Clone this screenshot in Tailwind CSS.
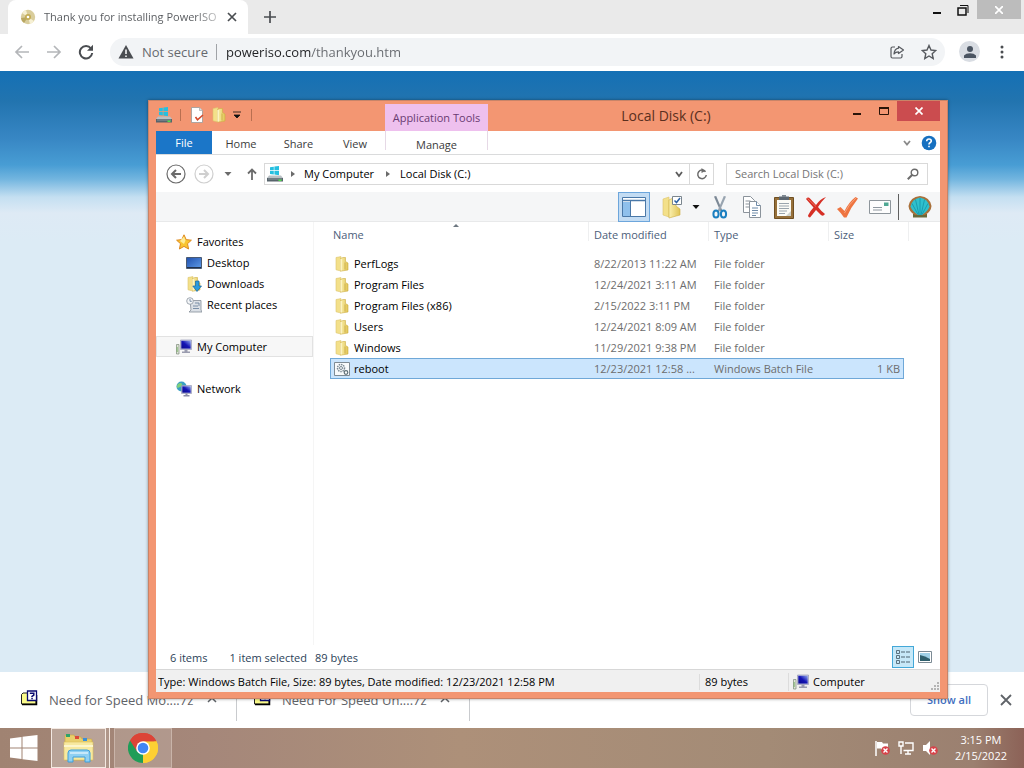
<!DOCTYPE html>
<html lang="en">
<head>
<meta charset="UTF-8">
<meta name="viewport" content="width=device-width, initial-scale=1">
<title>Local Disk (C:)</title>
<script src="https://cdn.jsdelivr.net/npm/@tailwindcss/browser@4"></script>
</head>
<body class="relative flex flex-col h-screen overflow-hidden bg-white font-['Open_Sans','Noto_Sans',sans-serif] text-[11px] leading-4 text-black">

	<!-- shared icons -->
	<svg class="absolute size-0" aria-hidden="true">
		<defs>
			<linearGradient id="g-folder" x1="0" x2="1"><stop offset="0" stop-color="#fbf0ae"/><stop offset="1" stop-color="#dfc355"/></linearGradient>
			<linearGradient id="g-screen" x1="0" y1="1" x2="1" y2="0"><stop offset="0" stop-color="#0a0a8c"/><stop offset=".5" stop-color="#1414b4"/><stop offset="1" stop-color="#8fa8f0"/></linearGradient>
			<linearGradient id="g-desk" x1="0" y1="0" x2="1" y2="1"><stop offset="0" stop-color="#1f4fae"/><stop offset="1" stop-color="#5f9ce8"/></linearGradient>
		</defs>
		<symbol id="i-folder" viewBox="0 0 16 16">
			<path d="M2 1.500 7 .6V15l-5-1.200z" fill="#f3e08a" stroke="#dcc46c" stroke-width=".6"/>
			<path d="M6.500 2.500 9 1.500h2.500v4L14 7v7L6.500 15.200z" fill="url(#g-folder)" stroke="#cfae45" stroke-width=".6"/>
			<path d="M7 3v11.500" stroke="#fffbe0" stroke-width="1"/>
			<path d="M11 6.500v7" stroke="#c9a83c" stroke-width=".8"/>
		</symbol>
		<symbol id="i-drive" viewBox="0 0 16 16">
			<path d="M3 1.200 6.800.7v3.600H3zM7.400.6 12 0v4.300H7.400zM3 5h3.800v3.500L3 8zM7.400 5H12v4.200l-4.600-.6z" fill="#25bfe0"/>
			<path d="M2 9.500h12l2 2.500H0z" fill="#b9c0c4"/>
			<path d="M0 12h16v3.500H0z" fill="#57636b"/>
			<path d="M1 12.500h14v1H1z" fill="#8b979e"/>
			<path d="M11.500 13.500h3v1.500h-3z" fill="#4fe04a"/>
		</symbol>
		<symbol id="i-computer" viewBox="0 0 16 16">
			<path d="M.5 5.500h2.500V15H.5z" fill="#dfe5d8" stroke="#7d8a78" stroke-width=".7"/>
			<path d="M1.200 8v5" stroke="#6fae5e" stroke-width=".8"/>
			<path d="M4.500 1h11v9.500h-11z" fill="#c9cbe0" stroke="#8c8fae" stroke-width=".6"/>
			<path d="M5.300 1.800h9.400v7.800H5.300z" fill="url(#g-screen)"/>
			<path d="M8.500 10.500h3v2h2.500V14H6v-1.500h2.500z" fill="#9a9caf"/>
		</symbol>
		<symbol id="i-badfile" viewBox="0 0 18 16">
			<path d="M1.500 4.500 3 3h13v11H1.500z" fill="#fbfb8a" stroke="#222" stroke-width="1"/>
			<path d="M2 14.500h14.500V5" fill="none" stroke="#000" stroke-width="1.500"/>
			<path d="M7.500 1h9v9.500h-9z" fill="#fff" stroke="#0a0a70" stroke-width="1.300"/>
			<path d="M9.800 3.200h4v1.800l-1.800 1.300v1" fill="none" stroke="#0a0a70" stroke-width="1.500"/>
			<path d="M11.300 8h1.500v1.300h-1.500z" fill="#0a0a70"/>
		</symbol>
		<symbol id="i-redx" viewBox="0 0 10 10">
			<circle cx="5" cy="5" r="4.800" fill="#d8434a"/>
			<path d="m2.800 2.800 4.400 4.400m0-4.400L2.800 7.200" stroke="#fff" stroke-width="1.500"/>
		</symbol>
	</svg>

	<!-- browser tab strip -->
	<header class="flex h-[34px] shrink-0 items-start bg-[#eaeaea]">
		<div class="ml-2 flex h-full w-60 items-center rounded-t-lg bg-white pl-3 pr-2.5">
			<svg class="size-4 shrink-0" viewBox="0 0 16 16"><circle cx="8" cy="8" r="7.200" fill="#d9cd9c"/><path d="M8 8 2 4a7 7 0 0 1 4-3zM8 8l6 4a7 7 0 0 1-4 3z" fill="#f6f0d4"/><path d="M8 8 1 9a7 7 0 0 0 3 5z" fill="#b9a762"/><circle cx="8" cy="8" r="3" fill="#c3ac55"/><circle cx="8" cy="8" r="1.300" fill="#fff"/></svg>
			<p class="ml-2 flex-1 whitespace-nowrap bg-[linear-gradient(90deg,#55585c_85%,#dcdcdc)] bg-clip-text text-transparent">Thank you for installing PowerISO</p>
			<button class="ml-1" aria-label="Close tab"><svg class="size-3" viewBox="0 0 12 12"><path d="m2 2 8 8m0-8-8 8" stroke="#4a4d51" stroke-width="1.700"/></svg></button>
		</div>
		<button class="ml-4 mt-[11px]" aria-label="New tab"><svg class="size-3" viewBox="0 0 12 12"><path d="M6 0v12M0 6h12" stroke="#4a4d51" stroke-width="1.700"/></svg></button>
		<div class="ml-auto flex h-[19px] items-center">
			<button class="w-6" aria-label="Minimize"><svg class="mx-auto h-3 w-2" viewBox="0 0 8 12"><path d="M0 9h8" stroke="#111" stroke-width="2"/></svg></button>
			<button class="w-7" aria-label="Restore"><svg class="mx-auto size-3" viewBox="0 0 12 12" fill="none" stroke="#111"><path d="M1 4h8v7H1z" stroke-width="1.500"/><path d="M3 1.500h8V9"/></svg></button>
			<button class="mr-[3px] h-full w-11 bg-[#bcbcbc]" aria-label="Close"><svg class="mx-auto size-2" viewBox="0 0 8 8"><path d="m0 0 8 8m0-8L0 8" stroke="#fff" stroke-width="1.700"/></svg></button>
		</div>
	</header>

	<!-- browser toolbar -->
	<nav class="flex h-[37px] shrink-0 items-center bg-white pb-0.5 pl-3.5 pr-3.5">
		<button aria-label="Back"><svg class="size-4" viewBox="0 0 16 16" fill="none" stroke="#b4b6b9" stroke-width="1.700"><path d="M15 8H2m6-6L2 8l6 6"/></svg></button>
		<button class="ml-4" aria-label="Forward"><svg class="size-4" viewBox="0 0 16 16" fill="none" stroke="#b4b6b9" stroke-width="1.700"><path d="M1 8h13M8 2l6 6-6 6"/></svg></button>
		<button class="ml-4" aria-label="Reload"><svg class="size-4" viewBox="0 0 16 16"><path d="M13 4.500A6.200 6.200 0 1 0 14.200 9" fill="none" stroke="#4a4d51" stroke-width="2"/><path d="M15 .8v6H9z" fill="#4a4d51"/></svg></button>
		<div class="ml-4 flex h-7 flex-1 items-center rounded-full bg-[#f2f4f6] px-2 text-[13px] text-[#66696e]">
			<svg class="size-4 shrink-0" viewBox="0 0 16 16"><path d="M8 1 15.500 14.500H.5z" fill="#4a4d51"/><path d="M8 5.500V10m0 1.500v1.500" stroke="#fff" stroke-width="1.500"/></svg>
			<span class="ml-2 whitespace-nowrap">Not secure</span>
			<span class="ml-2 h-4 w-px shrink-0 bg-[#a0a3a7]"></span>
			<input type="text" aria-label="Address" value="poweriso.com/thankyou.htm" class="ml-[9px] h-5 min-w-0 flex-1 bg-[linear-gradient(90deg,#202124_85px,#66696e_85px)] bg-clip-text text-transparent outline-none">
			<button aria-label="Share"><svg class="size-4" viewBox="0 0 16 16" fill="none" stroke="#56595e" stroke-width="1.200"><path d="M6 3H3.500Q2 3 2 4.500v8Q2 14 3.500 14h8q1.500 0 1.500-1.500V10"/><path d="M9.500 2.500 14.500 6l-5 3.500V7.800Q6.500 7.800 5 10q.3-5 4.500-5.800z" stroke-linejoin="round"/></svg></button>
			<button class="ml-4" aria-label="Bookmark"><svg class="size-4" viewBox="0 0 16 16" fill="none" stroke="#56595e" stroke-width="1.400"><path d="m8 1.500 2 4.500 4.800.5-3.600 3.200 1 4.800L8 12l-4.200 2.500 1-4.800L1.200 6.500 6 6z"/></svg></button>
		</div>
		<button class="ml-3.5 flex size-[21px] items-center justify-center rounded-full bg-[#d9dde3]" aria-label="Profile"><svg class="size-3" viewBox="0 0 12 12" fill="#4b5562"><circle cx="6" cy="3" r="3"/><path d="M0 12V9.500Q2 7.300 6 7.300t6 2.200V12z"/></svg></button>
		<button class="ml-3.5" aria-label="Menu"><svg class="size-4" viewBox="0 0 16 16" fill="#4a4d51"><circle cx="8" cy="3" r="1.500"/><circle cx="8" cy="8" r="1.500"/><circle cx="8" cy="13" r="1.500"/></svg></button>
	</nav>

	<!-- web page behind the window -->
	<main class="flex-1 bg-[#dcebf5] bg-[linear-gradient(#1470b5,#2274af_30px,#3887c4_68px,#489dd4_94px,#72b5df_108px,#c4dff1_126px,#deeaf5_142px,#dcebf5_170px)]"></main>

	<!-- downloads bar -->
	<section class="flex h-14 shrink-0 items-center bg-white text-[13px] text-[#5f6368]">
		<div class="flex h-[42px] w-[237px] items-center border-r border-[#c9cbce] pl-5 pr-4">
			<svg class="mb-1 h-4 w-[18px]"><use href="#i-badfile"/></svg>
			<span class="ml-[11px] whitespace-nowrap">Need for Speed Mo....7z</span>
			<button class="ml-auto" aria-label="Options"><svg class="size-4" viewBox="0 0 16 16"><path d="m4 10 4-4 4 4" fill="none" stroke="#5f6368" stroke-width="1.500"/></svg></button>
		</div>
		<div class="flex h-[42px] w-[233px] items-center border-r border-[#c9cbce] pl-4 pr-4">
			<svg class="mb-1 h-4 w-[18px]"><use href="#i-badfile"/></svg>
			<span class="ml-[11px] whitespace-nowrap">Need For Speed Un....7z</span>
			<button class="ml-auto" aria-label="Options"><svg class="size-4" viewBox="0 0 16 16"><path d="m4 10 4-4 4 4" fill="none" stroke="#5f6368" stroke-width="1.500"/></svg></button>
		</div>
		<button class="ml-auto h-8 w-[78px] rounded border border-[#d5d7db] text-[11px] font-semibold text-[#3f6fc0]">Show all</button>
		<button class="ml-3 mr-3" aria-label="Close downloads"><svg class="size-3" viewBox="0 0 12 12"><path d="m1 1 10 10m0-10L1 11" stroke="#5f6368" stroke-width="1.800"/></svg></button>
	</section>

	<!-- taskbar -->
	<footer class="flex h-10 shrink-0 items-center bg-[linear-gradient(90deg,#a08372,#a5877a_20%,#ad9079_45%,#a38b76_75%,#9b8070_95%,#8c6257)] text-white">
		<button class="ml-2.5" aria-label="Start"><svg class="h-[26px] w-7" viewBox="0 0 28 26" fill="#fff"><path d="M0 3.500 11.500 2v10.500H0zM12.500 1.800 27.500 0v12.500h-15zM0 13.500h11.500V24L0 22.500zM12.500 13.500h15V26l-15-1.800z"/></svg></button>
		<button class="ml-[13px] flex h-full w-[55px] items-center justify-center border border-[#f3e9e2] bg-white/25" aria-label="File Explorer">
			<svg class="size-8" viewBox="0 0 32 32"><path d="M2 4q0-1 1-1h8l1 2h6l1 2h9q1 0 1 1v20H2z" fill="#e9cf6c" stroke="#c9a840" stroke-width=".6"/><path d="M3 2h4v3H3z" fill="#2fa36a"/><path d="M12 4h4v3h-4z" fill="#dc4a38"/><path d="M20 6h4v3h-4z" fill="#3b8fd8"/><path d="M1 10h29v18H1z" fill="#f7e9a0" stroke="#dcc15c" stroke-width=".6"/><path d="M1 14h29" stroke="#fdf6cc" stroke-width="2"/><path d="M5 30V21q0-3 3-3h16q3 0 3 3v9h-5v-5H10v5z" fill="#8fd0f2" stroke="#3d9fdb" stroke-width="1"/><path d="M7 21h18" stroke="#d9f1fc" stroke-width="1.500"/></svg>
		</button>
		<div class="h-full w-1 border-r border-[#f3e9e2] bg-white/15"></div>
		<button class="ml-1 flex h-full w-[58px] items-center justify-center border border-[#c9b4a9] bg-white/15" aria-label="Chrome">
			<svg class="size-[30px]" viewBox="0 0 30 30"><path d="M15 15 2 7.500A15 15 0 0 1 28 7.500z" fill="#dc4437"/><path d="M15 15 28 7.500A15 15 0 0 1 15 30l-2-4z" fill="#fdd033"/><path d="M15 15v15A15 15 0 0 1 2 7.500z" fill="#1f9d58"/><path d="M15 8.200h13.400A15 15 0 0 1 15 30l6-11.500z" fill="#fdd033"/><path d="M2 7.500 9 18.500 15 8.200h13.400A15 15 0 0 0 2 7.500z" fill="#dc4437"/><circle cx="15" cy="15" r="6.800" fill="#fff"/><circle cx="15" cy="15" r="5.300" fill="#4286f4"/></svg>
		</button>
		<div class="ml-auto flex items-center gap-2">
			<svg class="size-4" viewBox="0 0 16 16"><path d="M2 1v15" stroke="#fff" stroke-width="1.500"/><path d="M3 2h5l1 1.500h5V10H8L7 8.500H3z" fill="#fff"/><use href="#i-redx" x="7" y="6" width="9" height="9"/></svg>
			<svg class="size-4" viewBox="0 0 16 16" fill="none" stroke="#fff" stroke-width="1.400"><path d="M1 2h4v4H1zM3 6v8M7 3h8v7.500H5.500M10 10.500V14M7 14h6"/></svg>
			<svg class="size-4" viewBox="0 0 16 16"><path d="M1 5h3l4-4v14l-4-4H1z" fill="#fff"/><use href="#i-redx" x="7" y="6" width="9" height="9"/></svg>
		</div>
		<time class="ml-[17px] mr-[17px] text-center">3:15 PM<br>2/15/2022</time>
	</footer>

	<!-- explorer window, floats over the browser -->
	<div class="absolute bottom-[69px] left-[148px] right-[76px] top-[100px] flex flex-col border border-[#c98468] bg-[#f39672] px-[7px] pb-1.5 shadow-[0_0_3px_rgba(0,0,0,0.4)]">
		<div class="flex h-[30px] shrink-0 items-start">
			<div class="mt-1.5 flex w-[229px] items-center">
				<svg class="size-4"><use href="#i-drive"/></svg>
				<span class="ml-2 h-3 w-px bg-[#b96f50]"></span>
				<svg class="ml-2 size-4" viewBox="0 0 16 16"><path d="M2.500.5h8l3 3v12h-11z" fill="#fff" stroke="#9a9a9a" stroke-width=".8"/><path d="M10.500.5v3h3" fill="#ddd" stroke="#9a9a9a" stroke-width=".6"/><path d="m6.500 10 2 2.800L14 8" fill="none" stroke="#d44a2c" stroke-width="1.600"/></svg>
				<svg class="ml-1.5 size-4"><use href="#i-folder"/></svg>
				<svg class="ml-1.5 size-2" viewBox="0 0 8 8"><path d="M0 1h8M1 4h6L4 7z" fill="#111" stroke="#111" stroke-width=".8"/></svg>
				<span class="ml-2.5 h-3 w-px bg-[#b96f50]"></span>
			</div>
			<div class="mt-[3px] w-[103px] self-stretch bg-[#eec0ee] pt-1.5 text-center text-[#6a3b72]">Application Tools</div>
			<h1 class="flex-1 self-center text-center text-[14px] text-[#5a2f1e]">Local Disk (C:)</h1>
			<button class="h-5 w-[26px]" aria-label="Minimize"><svg class="mx-auto h-3 w-2" viewBox="0 0 8 12"><path d="M0 9h8" stroke="#2a1409" stroke-width="2"/></svg></button>
			<button class="h-5 w-[27px]" aria-label="Maximize"><svg class="mx-auto h-2 w-2.5" viewBox="0 0 10 8"><path d="M.5 1h9v6.500h-9z" fill="none" stroke="#2a1409"/><path d="M0 1h10" stroke="#2a1409" stroke-width="2"/></svg></button>
			<button class="h-5 w-[43px] bg-[#cb4c4f]" aria-label="Close"><svg class="mx-auto size-2" viewBox="0 0 8 8"><path d="m.5.5 7 7m0-7-7 7" stroke="#fff" stroke-width="1.700"/></svg></button>
		</div>

		<div class="flex min-h-0 flex-1 flex-col bg-white">
			<!-- ribbon tabs -->
			<div class="flex h-6 shrink-0 items-stretch border-b border-[#dadbdc] text-[#3b3b3b]">
				<button class="w-14 bg-[#1b76c8] text-white">File</button>
				<button class="w-[58px] pt-0.5">Home</button>
				<button class="w-[57px] pt-0.5">Share</button>
				<button class="mr-0.5 w-14 pt-0.5">View</button>
				<button class="mb-1 w-[103px] border-x border-[#e6d9e6] pt-1.5">Manage</button>
				<button class="ml-auto mr-2" aria-label="Expand ribbon"><svg class="size-3" viewBox="0 0 12 12"><path d="m3 4 3 3.500L9 4" fill="none" stroke="#8a8a8a" stroke-width="1.800"/></svg></button>
				<button class="mr-[3px]" aria-label="Help"><svg class="size-4" viewBox="0 0 16 16"><circle cx="8" cy="8" r="7.300" fill="#1670c0"/><path d="M5.700 6.200Q5.800 4 8 4t2.300 2Q10.300 7 9 7.800 8 8.400 8 9.600m0 1.200v1.500" fill="none" stroke="#fff" stroke-width="1.600"/></svg></button>
			</div>

			<!-- address row -->
			<div class="flex h-[37px] shrink-0 items-center pl-2.5 pr-3">
				<button aria-label="Back"><svg class="size-5" viewBox="0 0 20 20" fill="none" stroke="#6b6b6b"><circle cx="10" cy="10" r="9" stroke-width="1.200"/><path d="M15 10H6m4-4-4 4 4 4" stroke-width="2"/></svg></button>
				<button class="ml-2" aria-label="Forward"><svg class="size-5" viewBox="0 0 20 20" fill="none" stroke="#cfcfcf"><circle cx="10" cy="10" r="9" stroke-width="1.200"/><path d="M5 10h9m-4-4 4 4-4 4" stroke-width="2"/></svg></button>
				<button class="ml-2.5" aria-label="Recent locations"><svg class="size-2" viewBox="0 0 8 8"><path d="M.5 2h7L4 6z" fill="#6b6b6b"/></svg></button>
				<button class="ml-3.5" aria-label="Up"><svg class="size-3" viewBox="0 0 12 12" fill="none" stroke="#6b6b6b" stroke-width="1.800"><path d="M6 12V1.500M2 5.500l4-4 4 4"/></svg></button>
				<div class="ml-1.5 flex h-[22px] flex-1 items-center border border-[#d9d9d9]">
					<svg class="ml-0.5 size-4"><use href="#i-drive"/></svg>
					<svg class="ml-1.5 size-2" viewBox="0 0 8 8"><path d="M2 1v6l4-3z" fill="#6b6b6b"/></svg>
					<button class="ml-[7px]">My Computer</button>
					<svg class="ml-2.5 size-2" viewBox="0 0 8 8"><path d="M2 1v6l4-3z" fill="#6b6b6b"/></svg>
					<button class="ml-2">Local Disk (C:)</button>
					<button class="ml-auto mr-1" aria-label="Previous locations"><svg class="size-3" viewBox="0 0 12 12"><path d="m3 4 3 4 3-4" fill="none" stroke="#5c5c5c" stroke-width="1.800"/></svg></button>
					<button class="flex h-full w-6 items-center justify-center border-l border-[#d9d9d9]" aria-label="Refresh"><svg class="size-3" viewBox="0 0 12 12"><path d="M9.500 3.800A4.300 4.300 0 1 0 10.300 7" fill="none" stroke="#6b6b6b" stroke-width="1.500"/><path d="M5.500 0v5l4-2z" fill="#6b6b6b"/></svg></button>
				</div>
				<div class="ml-3 flex h-[22px] w-[202px] items-center border border-[#d9d9d9] px-2">
					<input type="search" aria-label="Search" placeholder="Search Local Disk (C:)" class="min-w-0 flex-1 outline-none placeholder:text-[#757575]">
					<svg class="size-3" viewBox="0 0 12 12" fill="none" stroke="#6b6b6b"><circle cx="7.500" cy="4.500" r="3.300" stroke-width="1.400"/><path d="M5 7 .8 11.200" stroke-width="2"/></svg>
				</div>
			</div>

			<!-- tool buttons -->
			<div class="flex h-[30px] shrink-0 items-center justify-end border-b border-[#e8e9ea] bg-[#f5f6f7] pr-2">
				<button class="flex h-[30px] w-8 items-center justify-center border border-[#6da6dc] bg-[#c3dcf3]" aria-label="Navigation pane"><svg class="size-6" viewBox="0 0 24 24"><path d="M.5 2.500h23v19H.5z" fill="#fff" stroke="#4a78a8"/><path d="M1 5.500h22" stroke="#4a78a8" stroke-width="1.500"/><path d="M1 7h7v14H1z" fill="#8fc0ec"/><path d="M8.500 6v15.500" stroke="#4a78a8"/></svg></button>
				<button class="ml-3 flex items-center" aria-label="Organize">
					<svg class="size-6" viewBox="0 0 24 24"><path d="m1 4 6-2v20l-6-2z" fill="#f3e08a" stroke="#dcc46c" stroke-width=".6"/><path d="m7 5 4-2h3v8l4 3v6L7 23z" fill="url(#g-folder)" stroke="#cfae45" stroke-width=".6"/><path d="M10.500 1.500h9v8h-9z" fill="#fff" stroke="#7b868e"/><path d="m12.500 5.500 2 2 3.500-4.500" fill="none" stroke="#2d62a5" stroke-width="1.500"/></svg>
					<svg class="ml-1.5 size-2" viewBox="0 0 8 8"><path d="M.5 2h7L4 6z" fill="#111"/></svg>
				</button>
				<button class="ml-2" aria-label="Cut"><svg class="size-6" viewBox="0 0 24 24" fill="none"><path d="M6 1.500 8.200 1l6.300 15-2 .5z" fill="#7c8996"/><path d="M18 1.500 15.800 1 9.500 16l2 .5z" fill="#98a4b0"/><ellipse cx="8" cy="19" rx="2.600" ry="3.500" stroke="#1b7fc0" stroke-width="2"/><ellipse cx="15.500" cy="19" rx="2.600" ry="3.500" stroke="#1b7fc0" stroke-width="2"/></svg></button>
				<button class="ml-2" aria-label="Copy"><svg class="size-6" viewBox="0 0 24 24" fill="#fff" stroke="#8b939b"><path d="M3.500 1.500h7l4 4v12h-11z"/><path d="M5.500 6h5m-5 3h4m-4 3h4"/><path d="M9.500 6.500h7l4 4v12h-11z"/><path d="M16.500 6.500v4h4M12 13h6m-6 2.500h6M12 18h6m-6 2.500h4" stroke="#6f8ba8"/></svg></button>
				<button class="ml-2" aria-label="Paste"><svg class="size-6" viewBox="0 0 24 24"><path d="M2.500 2.500h19v21h-19z" fill="#96703a" stroke="#6f4f22"/><path d="M5 5h14v16H5z" fill="#fbfbf6"/><path d="M19 16v5h-5z" fill="#cfd3cc"/><path d="M7 1.500h10v3.500H7z" fill="#5c6670"/><path d="M10 0h4v2h-4z" fill="#7e8891"/><path d="M7 8.500h10M7 11h10M7 13.500h10M7 16h8M7 18.500h6" stroke="#9aa5ad"/></svg></button>
				<button class="ml-2" aria-label="Delete"><svg class="size-6" viewBox="0 0 24 24"><path d="M2 4Q4 1.500 6 3.500L12 10Q16 4 22 2q-5 5-8 10 3 4 7 7-2 3-4 1l-5-5q-3 4-6 7.500-2 0-2-2Q6 16 9.500 12.500z" fill="#d62f25"/><path d="M3.500 3.500 12 11.500" stroke="#ee6f5e" stroke-width="1"/></svg></button>
				<button class="ml-2" aria-label="Properties"><svg class="size-6" viewBox="0 0 24 24"><path d="m1 14 3.500-2 4 4Q13 7 19.500 2L22 3.500Q15 12 10.500 22.500H8Q5 18 1 14z" fill="#ee7440"/><path d="M8.500 18Q13 9 20 3" fill="none" stroke="#f8a27c" stroke-width="1"/></svg></button>
				<button class="ml-2" aria-label="E-mail"><svg class="size-6" viewBox="0 0 24 24"><path d="M1.500 5.500h21v13h-21z" fill="#fdfdfd" stroke="#8d959b"/><path d="M16 7.500h4.500V11H16z" fill="#4fa893"/><path d="M5 12.500h9m-9 2.500h9" stroke="#8f98a0"/></svg></button>
				<span class="ml-1.5 h-[26px] w-px bg-[#5f5f5f]"></span>
				<button class="ml-[9px]" aria-label="Classic Shell"><svg class="size-6" viewBox="0 0 24 24"><path d="M5 19h14v3.500H5z" fill="#6b6a3a"/><path d="M12 1Q22 2 23.500 11 23 17 17 20H7Q1 17 .5 11 2 2 12 1z" fill="#a9703a"/><path d="M12 2.500Q20 4 21.500 11.500 20 16 14 20h-4Q4 16 2.500 11.500 4 4 12 2.500z" fill="#2fc0cd"/><path d="M12 3v17M7.500 4.500 11 20M16.500 4.500 13 20M4 8.500l6 11M20 8.500l-6 11" stroke="#1593a6" stroke-width=".8"/></svg></button>
			</div>

			<div class="flex min-h-0 flex-1">
				<!-- folder tree -->
				<aside class="w-[158px] shrink-0 border-r border-[#f5f5f5] pt-[9px]">
					<ul class="leading-[21px]">
						<li><a href="#" class="flex items-center pl-5"><svg class="mr-[5px] size-4" viewBox="0 0 16 16"><path d="m8 .8 2.200 4.800 5.200.6-3.900 3.500 1.100 5.300L8 12.400 3.400 15l1.100-5.300L.6 6.200l5.200-.6z" fill="#f9c531" stroke="#de8a22"/><path d="M8 2.500 9.500 6.500 8 10 4 7z" fill="#fdec9a"/></svg>Favorites</a></li>
						<li><a href="#" class="flex items-center pl-[30px]"><svg class="mr-[5px] size-4" viewBox="0 0 16 16"><path d="M.5 2.500h15v11H.5z" fill="url(#g-desk)" stroke="#4a5a72"/><path d="M1 12.500h14" stroke="#20304a"/></svg>Desktop</a></li>
						<li><a href="#" class="flex items-center pl-[30px]"><svg class="mr-[5px] size-4" viewBox="0 0 16 16"><use href="#i-folder"/><path d="M9.500 5h3.500v5h2.500L11 15.500 6.800 10h2.700z" fill="#2b9bdc" stroke="#14649c" stroke-width=".7"/></svg>Downloads</a></li>
						<li><a href="#" class="flex items-center pl-[30px]"><svg class="mr-[5px] size-4" viewBox="0 0 16 16"><path d="M4 3.500h11V13l1 2H3l2-2z" fill="#dbe0e6" stroke="#848d97" stroke-width=".8"/><circle cx="4" cy="4" r="3.300" fill="#f4f6f8" stroke="#8b949e" stroke-width=".8"/><path d="M4 2v2.300h1.800M7 9h5M7 11.500h6M9 6h4v3" fill="none" stroke="#6f87a0" stroke-width=".9"/></svg>Recent places</a></li>
						<li class="mt-[21px]"><a href="#" class="flex h-[21px] items-center border border-[#e2e2e2] bg-[#f7f7f7] pl-[19px]"><svg class="mr-[5px] size-4"><use href="#i-computer"/></svg>My Computer</a></li>
						<li class="mt-[21px]"><a href="#" class="flex items-center pl-5"><svg class="mr-[5px] size-4" viewBox="0 0 16 16"><circle cx="5.500" cy="5.500" r="5" fill="#3a9fc4"/><path d="M2 3q3-2 4 0t-2 3-2 2Q0 5 2 3z" fill="#7fd07a"/><path d="M5.500 4.500h10v8h-10z" fill="#c9cbe0" stroke="#8c8fae" stroke-width=".6"/><path d="M6.300 5.300h8.400v6.400H6.300z" fill="url(#g-screen)"/><path d="M9.500 12.500h2V14h2v1.500h-6V14h2z" fill="#8a8ca6"/></svg>Network</a></li>
					</ul>
				</aside>

				<!-- file list -->
				<div class="relative flex flex-1 items-start pl-4">
					<svg class="absolute left-[139px] top-0.5 h-[3px] w-1.5" viewBox="0 0 8 4"><path d="M0 4 4 0l4 4z" fill="#6d7780"/></svg>
					<table class="w-[574px] table-fixed border-collapse text-left text-[#6d6d6d]">
						<thead class="text-[#4c607a]">
							<tr>
								<th class="h-[31px] w-[258px] pb-1.5 pl-[3px] font-normal">Name</th>
								<th class="w-[120px] bg-[linear-gradient(#eeeff0,#eeeff0)] bg-[length:1px_19px] bg-no-repeat pb-1.5 pl-1.5 font-normal">Date modified</th>
								<th class="w-[120px] bg-[linear-gradient(#eeeff0,#eeeff0)] bg-[length:1px_19px] bg-no-repeat pb-1.5 pl-1.5 font-normal">Type</th>
								<th class="bg-[linear-gradient(#eeeff0,#eeeff0)] bg-[length:1px_19px] bg-no-repeat pb-1.5 pl-1.5 font-normal">Size</th>
							</tr>
						</thead>
						<tbody id="files"></tbody>
					</table>
					<span class="ml-1 h-[19px] w-px bg-[#eeeff0]"></span>
				</div>
			</div>

			<!-- selection summary -->
			<div class="flex h-6 shrink-0 items-center pl-3.5 pr-2 text-[#2c3f58]">
				<span class="pt-0.5">6 items</span>
				<span class="ml-[22px] pt-0.5">1 item selected</span>
				<span class="ml-2 pt-0.5">89 bytes</span>
				<button class="ml-auto flex h-[22px] w-[22px] items-center justify-center border border-[#43a8d8] bg-[#c6e8f8]" aria-label="Details view"><svg class="size-4" viewBox="0 0 16 16" fill="none" stroke="#4f6572"><path d="M1.500 1.500h3v3h-3zM1.500 6.500h3v3h-3zM1.500 11.500h3v3h-3z" stroke-width=".9"/><path d="M6 3h4m1 0h4M6 8h4m1 0h4M6 13h4m1 0h4" stroke-width="1.200"/></svg></button>
				<button class="ml-1" aria-label="Large icons"><svg class="size-3.5" viewBox="0 0 14 14"><path d="M.5 1.500h13v11H.5z" fill="#fff" stroke="#7c8b95"/><path d="M2 3h10v8H2z" fill="#9fd0e6"/><path d="M2 5q5 1 10 4v2H2z" fill="#2f5f6c"/></svg></button>
			</div>

			<!-- status bar -->
			<div class="flex h-[23px] shrink-0 items-center border-t border-[#d7d7d7] bg-[#f0f0f0] pl-0.5 pt-px">
				<span class="flex-1 truncate">Type: Windows Batch File, Size: 89 bytes, Date modified: 12/23/2021 12:58 PM</span>
				<span class="w-[89px] border-l border-[#dcdcdc] pl-[5px]">89 bytes</span>
				<span class="flex w-[152px] items-center border-l border-[#dcdcdc] pl-1"><svg class="mr-1 size-4"><use href="#i-computer"/></svg>Computer
					<svg class="ml-auto mt-2 size-2.5" viewBox="0 0 10 10" fill="#b4b4b4"><path d="M7 1h2v2H7zM4 4h2v2H4zM7 4h2v2H7zM1 7h2v2H1zM4 7h2v2H4zM7 7h2v2H7z"/></svg>
				</span>
			</div>
		</div>
	</div>

	<script type="text/javascript">
	const files = [
		{ name: 'PerfLogs', date: '8/22/2013 11:22 AM', type: 'File folder', size: '' },
		{ name: 'Program Files', date: '12/24/2021 3:11 AM', type: 'File folder', size: '' },
		{ name: 'Program Files (x86)', date: '2/15/2022 3:11 PM', type: 'File folder', size: '' },
		{ name: 'Users', date: '12/24/2021 8:09 AM', type: 'File folder', size: '' },
		{ name: 'Windows', date: '11/29/2021 9:38 PM', type: 'File folder', size: '' },
		{ name: 'reboot', date: '12/23/2021 12:58 ...', type: 'Windows Batch File', size: '1 KB', selected: true }
	];

	const folderIcon = '<svg class="mr-1 size-4"><use href="#i-folder"/></svg>';
	const batchIcon = '<svg class="mr-1 size-4" viewBox="0 0 16 16" fill="none"><path d="M.5 1.500h15v13H.5z" fill="#f8fafb" stroke="#7e8b94"/><circle cx="7" cy="7" r="3.500" stroke="#7b8a94" stroke-width="1.500" stroke-dasharray="1.500 .8"/><circle cx="7" cy="7" r="1.500" stroke="#7b8a94"/><circle cx="12" cy="11.500" r="1.800" stroke="#5f7078" stroke-width="1.200"/></svg>';

	document.querySelector('#files').innerHTML = files.map(function (file) {
		const rowClass = file.selected ? 'h-[21px] bg-[#cbe5fd] outline outline-[#6fa8d8] -outline-offset-1' : 'h-[21px]';
		return `<tr class="${rowClass}">
			<td class="pl-1 text-black"><span class="flex items-center">${file.selected ? batchIcon : folderIcon}${file.name}</span></td>
			<td class="whitespace-nowrap pl-1.5">${file.date}</td>
			<td class="whitespace-nowrap pl-1.5">${file.type}</td>
			<td class="pr-1 text-right">${file.size}</td>
		</tr>`;
	}).join('');
	</script>
</body>
</html>
